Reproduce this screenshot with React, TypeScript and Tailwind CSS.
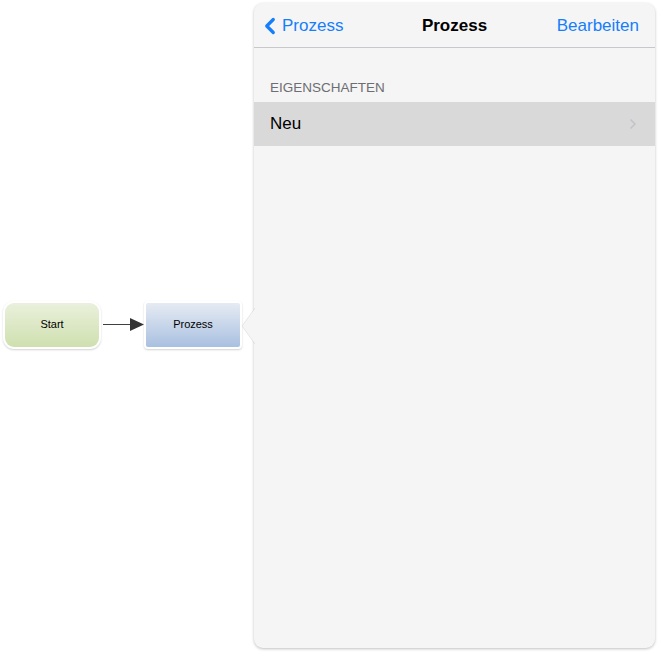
import { ChevronLeft, ChevronRight } from 'lucide-react';

function Node({ label, variant }: { label: string; variant: 'start' | 'process' }) {
  const fill =
    variant === 'start'
      ? 'rounded-[9px] bg-gradient-to-b from-[#eaf0dc] to-[#cfe0af]'
      : 'rounded-[2px] bg-gradient-to-b from-[#e6ebf3] to-[#a9c0e0]';
  return (
    <div
      className={`${variant === 'start' ? 'rounded-[11px]' : 'rounded-[4px]'} bg-white p-[2px] shadow-[0_1px_2px_rgba(0,0,0,0.18)]`}
    >
      <div className={`${fill} w-[94px] h-[44px] flex items-center justify-center text-[11px] text-black`}>
        {label}
      </div>
    </div>
  );
}

export default function App() {
  return (
    <div
      className="w-[659px] h-[654px] bg-white flex overflow-hidden"
      style={{ fontFamily: '"Liberation Sans", Arial, sans-serif' }}
    >
      {/* Diagram canvas */}
      <div className="w-[254px] flex items-center pl-[3px] pb-[5px]">
        <Node label="Start" variant="start" />
        <div className="flex items-center ml-[2px]">
          <div className="w-[27px] h-[1.5px] bg-[#404040]" />
          <svg width="14" height="13" viewBox="0 0 14 13">
            <path d="M0 0 L14 6.5 L0 13 Z" fill="#333" />
          </svg>
        </div>
        <Node label="Prozess" variant="process" />
      </div>

      {/* Popover panel */}
      <div className="relative mt-[3px] mb-[6px] w-[401px] rounded-[9px] bg-[#f5f5f5] shadow-[0_1px_3px_rgba(0,0,0,0.25)] flex flex-col">
        <div className="absolute left-[-13px] top-[305px] w-[14px] h-[36px]">
          <svg width="14" height="36" viewBox="0 0 14 36">
            <path d="M14 0 L1 18 L14 36 Z" fill="#f5f5f5" />
            <path d="M14 0 L1 18 L14 36" fill="none" stroke="rgba(0,0,0,0.08)" strokeWidth="1" />
          </svg>
        </div>

        {/* Navigation bar */}
        <div className="h-[45px] border-b border-[#c8c8cc] flex items-center justify-between px-[8px] pt-[2px] text-[17px]">
          <div className="flex items-center text-[#157efb] w-[120px]">
            <ChevronLeft className="w-[26px] h-[26px] -ml-[5px]" strokeWidth={3} />
            <span className="-ml-[1px]">Prozess</span>
          </div>
          <div className="font-bold text-black">Prozess</div>
          <div className="text-[#157efb] w-[120px] text-right pr-[8px]">Bearbeiten</div>
        </div>

        {/* Section */}
        <div className="pt-[32px] pb-[6px] px-[16px] text-[13.5px] text-[#6d6d72] leading-4">EIGENSCHAFTEN</div>
        <div className="h-[44px] bg-[#d9d9d9] flex items-center justify-between pl-[16px] pr-[14px]">
          <span className="text-[17px] text-black">Neu</span>
          <ChevronRight className="w-[16px] h-[16px] text-[#c4c4c8]" strokeWidth={2.5} />
        </div>
      </div>
    </div>
  );
}
